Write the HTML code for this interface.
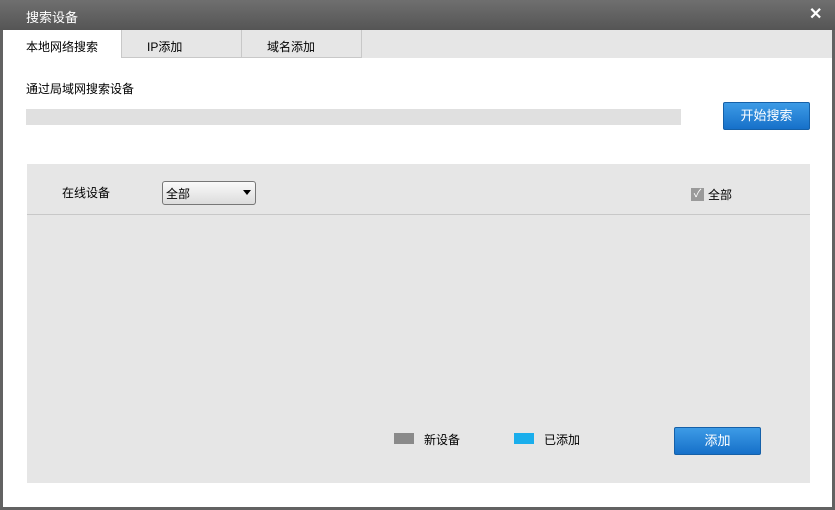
<!DOCTYPE html>
<html><head><meta charset="utf-8"><style>
*{margin:0;padding:0;box-sizing:border-box}
body{width:835px;height:510px;background:#626262;font-family:"Liberation Sans","Noto Sans CJK SC",sans-serif;font-size:12px;color:#000;position:relative;overflow:hidden}
.a{position:absolute}
.title{left:0;top:0;width:835px;height:30px;background:linear-gradient(#6f6f6f,#555);color:#fff;font-size:13px}
.win{left:3px;top:30px;width:829px;height:477px;background:#fff}
.btn{background:linear-gradient(#3d9be6,#1670c9);border:1px solid #1560a8;color:#fff;font-size:13px;text-align:center;border-radius:2px}
</style></head><body>
<div class="a title"><span class="a" style="left:26px;top:7px">搜索设备</span><span class="a" style="left:809px;top:4px;font-size:16px;font-weight:bold">✕</span></div>
<div class="a win">
 <div class="a" style="left:0;top:0;width:829px;height:28px;background:#e6e6e6"></div>
 <div class="a" style="left:0;top:0;width:118px;height:28px;background:#fff"></div>
 <div class="a" style="left:118px;top:0;width:1px;height:28px;background:#c8c8c8"></div>
 <div class="a" style="left:238px;top:0;width:1px;height:28px;background:#c8c8c8"></div>
 <div class="a" style="left:358px;top:0;width:1px;height:28px;background:#c8c8c8"></div>
 <div class="a" style="left:119px;top:27px;width:240px;height:1px;background:#c8c8c8"></div>
 <span class="a" style="left:23px;top:8px">本地网络搜索</span>
 <span class="a" style="left:144px;top:8px">IP添加</span>
 <span class="a" style="left:264px;top:8px">域名添加</span>
 <span class="a" style="left:23px;top:50px">通过局域网搜索设备</span>
 <div class="a" style="left:23px;top:79px;width:655px;height:16px;background:#e0e0e0"></div>
 <div class="a btn" style="left:720px;top:72px;width:87px;height:28px;line-height:25px">开始搜索</div>
 <div class="a" style="left:24px;top:134px;width:783px;height:319px;background:#e6e6e6"></div>
 <div class="a" style="left:24px;top:184px;width:783px;height:1px;background:#c8c8c8"></div>
 <span class="a" style="left:59px;top:154px">在线设备</span>
 <div class="a" style="left:159px;top:151px;width:94px;height:24px;border:1px solid #777;border-radius:3px;background:linear-gradient(#fafafa,#dcdcdc)"><span class="a" style="left:3px;top:3px">全部</span><span class="a" style="left:80px;top:8px;border:4px solid transparent;border-top:5px solid #000"></span></div>
 <div class="a" style="left:688px;top:158px;width:13px;height:13px;background:#9a9a9a;color:#fff;font-size:11px;line-height:13px;text-align:center">✓</div>
 <span class="a" style="left:705px;top:156px">全部</span>
 <div class="a" style="left:391px;top:403px;width:20px;height:11px;background:#8a8a8a"></div>
 <span class="a" style="left:421px;top:401px">新设备</span>
 <div class="a" style="left:511px;top:403px;width:20px;height:11px;background:#1aaeec"></div>
 <span class="a" style="left:541px;top:401px">已添加</span>
 <div class="a btn" style="left:671px;top:397px;width:87px;height:28px;line-height:25px">添加</div>
</div>
</body></html>
